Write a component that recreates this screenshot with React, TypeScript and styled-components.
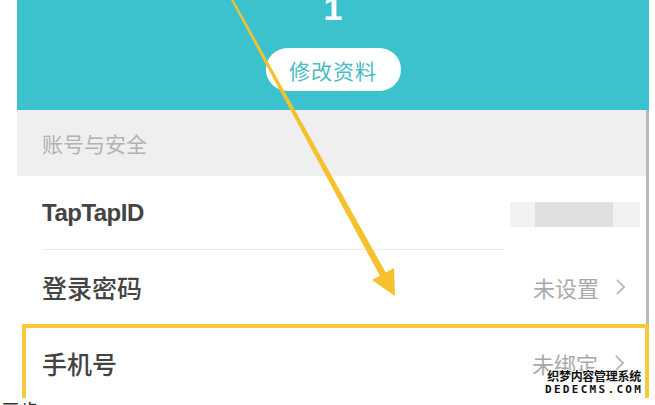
import styled, { createGlobalStyle } from 'styled-components'

const GlobalStyle = createGlobalStyle`
  html, body {
    margin: 0;
    padding: 0;
    background: #fff;
  }
  body {
    font-family: "Noto Sans CJK SC", "Noto Sans", sans-serif;
  }
`

type RowProps = {
    label: string,
    value?: string,
    bold?: boolean,
    highlighted?: boolean,
    masked?: boolean,
    divider?: boolean,
}

const SettingRow: React.FC<RowProps> = ({ label, value, bold, highlighted, masked, divider }) => {
    return (
        <Row $highlighted={highlighted} $divider={divider}>
            <Label $bold={bold}>{label}</Label>
            {masked && (
                <Mask>
                    <MaskBar />
                </Mask>
            )}
            {value && (
                <Value>
                    {value}
                    <Chevron viewBox="0 0 12 20">
                        <path d="M2 2 L10 10 L2 18" />
                    </Chevron>
                </Value>
            )}
        </Row>
    )
}

export default function App() {
    return (
        <Page>
            <GlobalStyle />
            <Shot>
                <Header>
                    <Level>1</Level>
                    <EditButton>修改资料</EditButton>
                </Header>
                <Scrolled>
                    <SectionTitle>账号与安全</SectionTitle>
                    <SettingRow label="TapTapID" bold masked divider />
                    <SettingRow label="登录密码" value="未设置" />
                </Scrolled>
                <SettingRow label="手机号" value="未绑定" highlighted />
            </Shot>
            <Caption>三步</Caption>

            <Arrow viewBox="0 0 655 405">
                <polygon points="231,0 233.5,0 386,273 380,276" />
                <polygon points="395,296 394,268 372,280" />
            </Arrow>

            <Watermark>
                <WatermarkCn>织梦内容管理系统</WatermarkCn>
                <WatermarkEn>DEDECMS.COM</WatermarkEn>
            </Watermark>
        </Page>
    )
}

const Page = styled.div`
    position: relative;
    width: 655px;
    height: 405px;
    overflow: hidden;
    background: #fff;
`

const Shot = styled.div`
    margin-left: 17px;
    width: 632px;
    display: flex;
    flex-direction: column;
`

const Header = styled.div`
    height: 110px;
    background: #3cc2cd;
    display: flex;
    flex-direction: column;
    align-items: center;
    overflow: hidden;
`

const Level = styled.div`
    margin-top: -12px;
    height: 60px;
    color: #fff;
    font-family: "Liberation Sans", sans-serif;
    font-weight: 700;
    font-size: 34px;
    line-height: 40px;
`

const EditButton = styled.div`
    width: 135px;
    height: 43px;
    border-radius: 22px;
    background: #fff;
    color: #48bcc6;
    font-size: 21px;
    display: flex;
    align-items: center;
    justify-content: center;
    letter-spacing: 1px;
`

const Scrolled = styled.div`
    display: flex;
    flex-direction: column;
    border-right: 3px solid #b9b9b9;
`

const SectionTitle = styled.div`
    height: 66px;
    background: #efefef;
    color: #b2b2b2;
    font-size: 21px;
    padding-left: 25px;
    display: flex;
    align-items: center;
`

const Row = styled.div<{ $highlighted?: boolean, $divider?: boolean }>`
    position: relative;
    height: ${p => p.$highlighted ? '70px' : '74px'};
    display: flex;
    align-items: center;
    padding-left: ${p => p.$highlighted ? '16px' : '25px'};
    padding-right: 20px;
    background: #fff;
    ${p => p.$highlighted && `
        margin-left: 5px;
        border: 4px solid #f6c93a;
        border-bottom: none;
    `}
    ${p => p.$divider && `
        &::after {
            content: "";
            position: absolute;
            left: 25px;
            width: 462px;
            bottom: 0;
            height: 1px;
            background: #ececec;
        }
    `}
`

const Label = styled.div<{ $bold?: boolean }>`
    flex: 1;
    color: #444;
    font-size: ${p => p.$bold ? '24px' : '25px'};
    font-weight: ${p => p.$bold ? 700 : 500};
    ${p => p.$bold && `font-family: "Liberation Sans", "Noto Sans CJK SC", sans-serif; letter-spacing: -0.5px;`}
`

const Value = styled.div`
    display: flex;
    align-items: center;
    gap: 16px;
    color: #a9a9a9;
    font-size: 22px;
`

const Chevron = styled.svg`
    width: 11px;
    height: 18px;
    fill: none;
    stroke: #b8b8b8;
    stroke-width: 2;
`

const Mask = styled.div`
    position: absolute;
    right: 6px;
    top: 26px;
    width: 130px;
    height: 25px;
    background: #f2f2f2;
    display: flex;
    justify-content: flex-start;
`

const MaskBar = styled.div`
    margin-left: 25px;
    width: 78px;
    height: 100%;
    background: #e0e0e0;
`

const Caption = styled.div`
    padding-left: 1px;
    color: #333;
    font-size: 19px;
    line-height: 24px;
`

const Arrow = styled.svg`
    position: absolute;
    left: 0;
    top: 0;
    width: 655px;
    height: 405px;
    fill: #f5c22e;
    pointer-events: none;
`

const Watermark = styled.div`
    position: absolute;
    left: 545px;
    top: 369px;
    display: flex;
    flex-direction: column;
    align-items: center;
    color: #111;
    font-weight: 700;
    text-shadow: 1px 0 #fff, -1px 0 #fff, 0 1px #fff, 0 -1px #fff;
`

const WatermarkCn = styled.div`
    font-size: 12px;
    line-height: 14px;
    letter-spacing: -0.3px;
`

const WatermarkEn = styled.div`
    font-family: "DejaVu Sans Mono", monospace;
    font-size: 11px;
    line-height: 13px;
    letter-spacing: 2.3px;
`
